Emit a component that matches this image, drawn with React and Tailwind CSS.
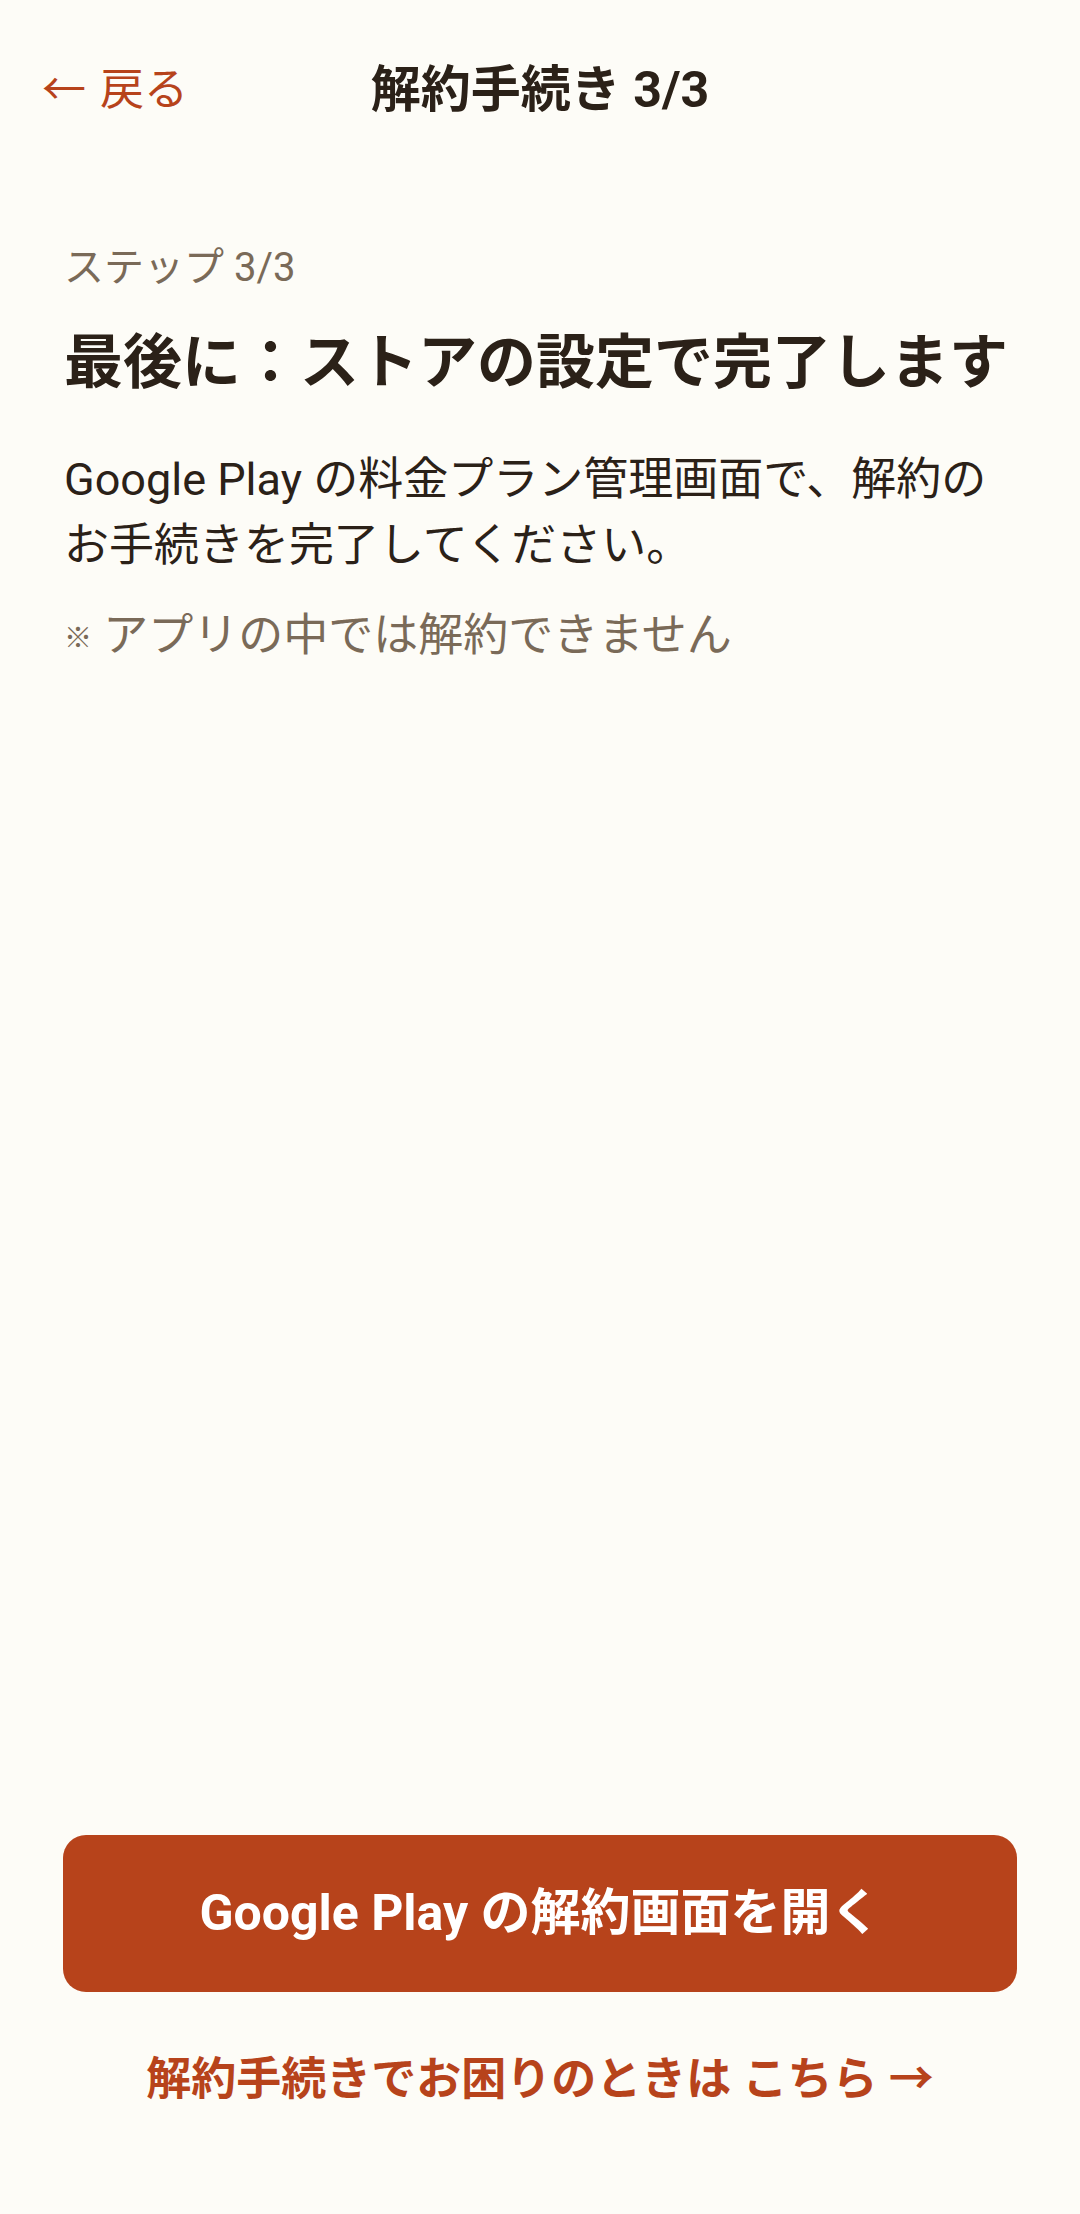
export default function App() {
  const font = { fontFamily: 'Roboto, "Noto Sans CJK JP", sans-serif' };

  return (
    <div
      style={font}
      className="w-full min-h-[2214px] bg-[#fdfcf7] flex flex-col text-[#2b2118]"
    >
      {/* Header */}
      <header className="h-[180px] grid grid-cols-[1fr_auto_1fr] items-center px-[42px]">
        <button className="justify-self-start flex items-center gap-[14px] text-[44px] leading-none text-[#b7431b]">
          <span>←</span>
          <span>戻る</span>
        </button>
        <h1 className="text-[50px] font-bold leading-none">解約手続き 3/3</h1>
        <div />
      </header>

      {/* Content */}
      <main className="px-[64px] pt-[61px] flex flex-col">
        <p className="text-[40px] leading-[54px] font-normal text-[#7a6a58]">ステップ 3/3</p>
        <h2 className="mt-[27px] text-[59px] leading-[81px] font-bold whitespace-nowrap">
          最後に：ストアの設定で完了します
        </h2>
        <p className="mt-[44px] text-[45px] leading-[66px]">
          Google Play の料金プラン管理画面で、解約のお手続きを完了してください。
        </p>
        <p className="mt-[24px] text-[45px] leading-[66px] text-[#7a6a58]">
          <span className="text-[28px] align-middle">※</span> アプリの中では解約できません
        </p>
      </main>

      <div className="flex-1" />

      {/* Actions */}
      <footer className="px-[63px] pb-[101px] flex flex-col items-center">
        <button className="w-full h-[157px] rounded-[23px] bg-[#b7431b] text-white text-[50px] font-bold flex items-center justify-center">
          Google Play の解約画面を開く
        </button>
        <a className="mt-[55px] text-[45px] leading-[66px] font-bold text-[#b7431b]">
          解約手続きでお困りのときは こちら →
        </a>
      </footer>
    </div>
  );
}
